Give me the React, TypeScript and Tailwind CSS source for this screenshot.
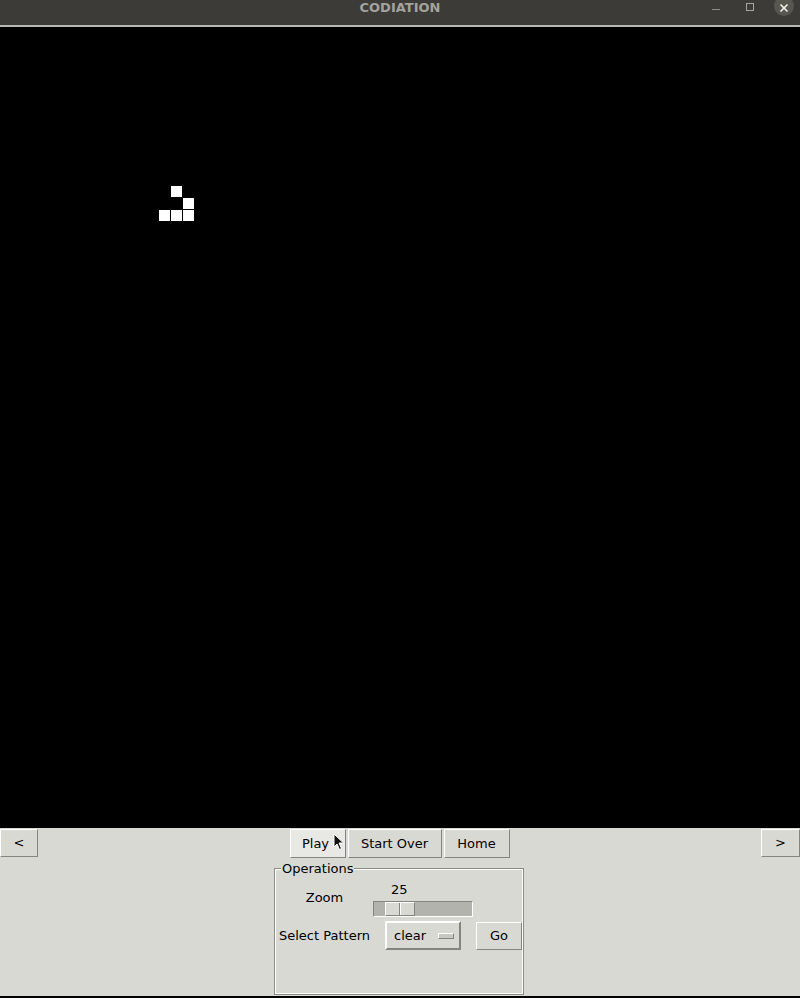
import React from "react";

const font = { fontFamily: '"DejaVu Sans", "Liberation Sans", sans-serif' };

const cells: [number, number][] = [
  [171, 159],
  [183, 171],
  [159, 183],
  [171, 183],
  [183, 183],
];

function TkButton({
  label,
  className = "",
}: {
  label: string;
  className?: string;
}) {
  return (
    <div
      className={`flex items-center justify-center border border-t-white border-l-white border-r-[#85857f] border-b-[#85857f] text-[13px] text-black ${className}`}
    >
      {label}
    </div>
  );
}

function TitleBar() {
  return (
    <div className="relative flex h-[25px] items-start justify-center bg-[#3c3b37] pt-[1px]">
      <span className="text-[13px] font-bold leading-[14px] text-[#a3a39d]">CODIATION</span>
      <div className="absolute right-0 top-0 flex h-[25px] items-start">
        <div className="mt-[9px] mr-[26px] h-[1px] w-[8px] bg-[#8f8f89]" />
        <div className="mt-[3px] mr-[20px] h-[8px] w-[8px] border border-[#a5a59f]" />
        <div className="-mt-[4px] mr-[6px] flex h-[20px] w-[20px] items-center justify-center rounded-full bg-[#57564f]">
          <svg width="10" height="10" viewBox="0 0 10 10" className="mt-[3px]">
            <path d="M1.5 1.5 L8.5 8.5 M8.5 1.5 L1.5 8.5" stroke="#f2f2f0" strokeWidth="1.6" />
          </svg>
        </div>
      </div>
    </div>
  );
}

function Canvas() {
  return (
    <div className="relative h-[801px] bg-black">
      {cells.map(([x, y], i) => (
        <div
          key={i}
          className="absolute h-[11px] w-[11px] bg-white"
          style={{ left: x, top: y }}
        />
      ))}
    </div>
  );
}

function Cursor() {
  return (
    <svg
      className="absolute left-[333px] top-[4px]"
      width="12"
      height="18"
      viewBox="0 0 12 18"
    >
      <path
        d="M1 1 L1 14 L4 11 L6.5 16.5 L8.5 15.5 L6 10 L10.5 10 Z"
        fill="#111"
        stroke="#fff"
        strokeWidth="1"
      />
    </svg>
  );
}

function Operations() {
  return (
    <div className="relative ml-[274px] mt-[10px] h-[127px] w-[250px] border border-[#8d8d88]">
      <div className="h-full w-full border border-white pt-[8px]">
        <div className="grid grid-cols-[97px_100px_auto]">
          <div className="flex h-[39px] items-center justify-center text-[13px]">Zoom</div>
          <div className="flex flex-col pt-[4px]">
            <div className="ml-[18px] h-[16px] text-[13px] leading-[16px]">25</div>
            <div className="mt-[3px] flex h-[16px] w-[100px] items-center border border-t-[#85857f] border-l-[#85857f] border-b-white border-r-white bg-[#b3b3ad]">
              <div className="ml-[11px] flex h-[14px] w-[30px] border border-t-white border-l-white border-b-[#85857f] border-r-[#85857f] bg-[#d9d9d4]">
                <div className="h-full w-[14px] border-r border-r-[#85857f]" />
                <div className="h-full w-[1px] bg-white" />
              </div>
            </div>
          </div>
          <div />
          <div className="mt-[3px] flex h-[31px] items-center justify-center text-[13px]">
            Select Pattern
          </div>
          <div className="mt-[3px] flex h-[31px] items-center justify-center">
            <div className="flex h-[29px] w-[76px] items-center border-2 border-t-white border-l-white border-b-[#85857f] border-r-[#85857f] pl-[7px] text-[13px]">
              <span>clear</span>
              <div className="ml-auto mr-[5px] h-[6px] w-[16px] border border-t-white border-l-white border-b-[#85857f] border-r-[#85857f] bg-[#c9c9c4]" />
            </div>
          </div>
          <div className="mt-[3px] flex h-[31px] items-center">
            <TkButton label="Go" className="ml-[3px] h-[28px] w-[46px]" />
          </div>
        </div>
      </div>
      <div className="absolute -top-[8px] left-[6px] bg-[#d9d9d4] px-[1px] text-[13px] leading-[15px]">
        Operations
      </div>
    </div>
  );
}

function Controls() {
  return (
    <div className="h-[168px] bg-[#d9d9d4] pt-[1px] text-black">
      <div className="relative grid h-[29px] grid-cols-[38px_1fr_39px]">
        <TkButton label="<" className="h-[28px]" />
        <div className="flex justify-center gap-[2px]">
          <TkButton label="Play" className="h-[29px] w-[56px] bg-[#e8e8e5] pr-[4px]" />
          <TkButton label="Start Over" className="h-[29px] w-[94px]" />
          <TkButton label="Home" className="h-[29px] w-[66px]" />
        </div>
        <TkButton label=">" className="h-[28px]" />
        <Cursor />
      </div>
      <Operations />
    </div>
  );
}

export default function App() {
  return (
    <div className="h-[998px] w-[800px] overflow-hidden bg-black" style={font}>
      <TitleBar />
      <div className="h-[2px] bg-[#b8b8b2]" />
      <Canvas />
      <Controls />
    </div>
  );
}
